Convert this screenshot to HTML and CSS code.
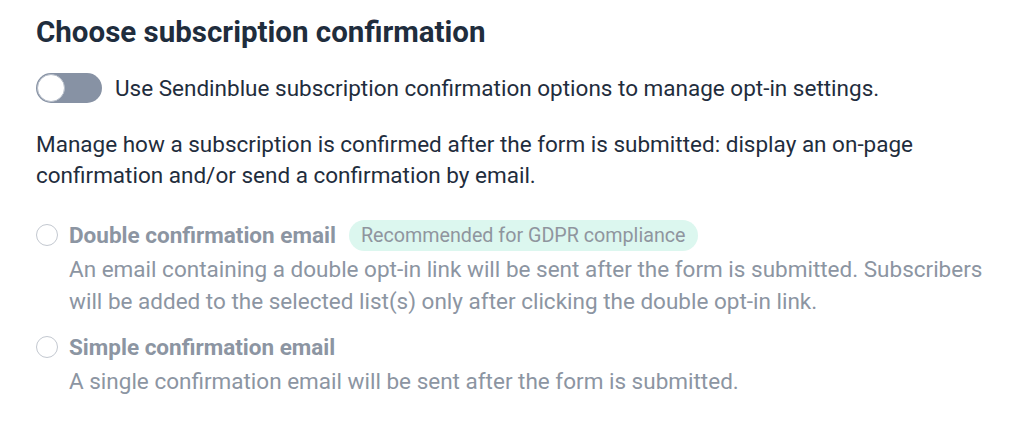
FILE: index.html
```html
<!DOCTYPE html>
<html>
<head>
<meta charset="utf-8">
<link rel="stylesheet" href="styles.css">
</head>
<body>
<div class="panel">
  <h2 class="title">Choose subscription confirmation</h2>
  <div class="toggle-row">
    <span class="toggle"><span class="knob"></span></span>
    <span class="toggle-label">Use Sendinblue subscription confirmation options to manage opt-in settings.</span>
  </div>
  <p class="intro">Manage how a subscription is confirmed after the form is submitted: display an on-page confirmation and/or send a confirmation by email.</p>
  <div class="option">
    <span class="radio"></span>
    <div class="option-body">
      <div class="option-head">
        <span class="option-title">Double confirmation email</span>
        <span class="badge">Recommended for GDPR compliance</span>
      </div>
      <p class="option-desc">An email containing a double opt-in link will be sent after the form is submitted. Subscribers will be added to the selected list(s) only after clicking the double opt-in link.</p>
    </div>
  </div>
  <div class="option">
    <span class="radio"></span>
    <div class="option-body">
      <div class="option-head">
        <span class="option-title">Simple confirmation email</span>
      </div>
      <p class="option-desc">A single confirmation email will be sent after the form is submitted.</p>
    </div>
  </div>
</div>
</body>
</html>
```
FILE: styles.css
```css
html, body {
  margin: 0;
  padding: 0;
  background: #ffffff;
}
body {
  font-family: Roboto, "Liberation Sans", sans-serif;
  color: #1f2d3d;
}
.panel {
  padding: 14px 0 0 36px;
}
.title {
  margin: 0;
  font-size: 29.5px;
  font-weight: 700;
  line-height: 36px;
  color: #1f2d3d;
}
.toggle-row {
  display: flex;
  align-items: center;
  gap: 13px;
  margin-top: 23px;
}
.toggle {
  flex: none;
  display: flex;
  align-items: center;
  width: 66px;
  height: 30px;
  border-radius: 15px;
  background: #8792a4;
  box-sizing: border-box;
  padding: 0 0 0 1px;
}
.knob {
  width: 28px;
  height: 28px;
  border-radius: 50%;
  background: #fff;
  box-sizing: border-box;
  border: 1px solid #b7bec9;
}
.toggle-label {
  font-size: 22.5px;
  line-height: 30px;
  white-space: nowrap;
}
.intro {
  margin: 26px 0 0;
  font-size: 22.5px;
  line-height: 31px;
  width: 885px;
}
.option {
  display: flex;
  gap: 11px;
  margin-top: 28px;
  color: #8c95a2;
}
.option + .option {
  margin-top: 14px;
}
.radio {
  flex: none;
  width: 22px;
  height: 22px;
  margin-top: 5px;
  border-radius: 50%;
  box-sizing: border-box;
  border: 1.5px solid #c3c8d0;
  background: #fff;
}
.option-head {
  display: flex;
  align-items: center;
  gap: 13px;
  height: 32px;
}
.option-title {
  font-size: 22.5px;
  font-weight: 700;
  white-space: nowrap;
}
.badge {
  background: #dcf7ef;
  color: #8f959e;
  font-size: 19.7px;
  line-height: 31px;
  padding: 0 12px;
  border-radius: 16px;
  white-space: nowrap;
}
.option-desc {
  margin: 2px 0 0;
  font-size: 22.5px;
  line-height: 32px;
  width: 930px;
}
```
